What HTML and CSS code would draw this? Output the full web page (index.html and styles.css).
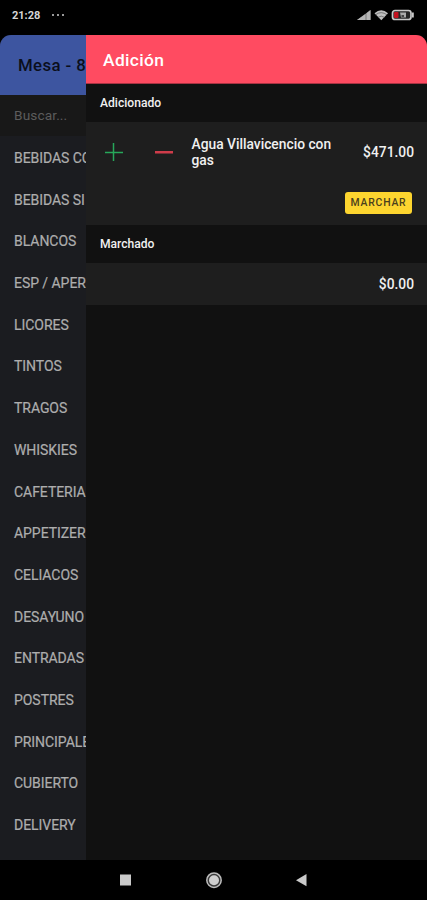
FILE: index.html
```html
<!DOCTYPE html>
<html lang="es">
<head>
<meta charset="utf-8">
<title>Adición</title>
<link rel="stylesheet" href="styles.css">
</head>
<body>
<div class="phone">
  <div class="status">
    <span class="clock">21:28</span>
    <span class="dots"><i></i><i></i><i></i></span>
    <svg class="status-icons" width="60" height="14" viewBox="0 0 60 14">
      <path d="M1 12 14.500 2V12Z" fill="#777"/>
      <path d="M1 12 9.500 6V12ZM10.500 5.200 14.500 2V12H10.500Z" fill="#b4b4b4"/>
      <path d="M18.500 5.200Q25.200-.8 32 5.200L25.300 12.300Z" fill="#c0c0c0"/>
      <path d="M19.500 6.800Q25.200 2.500 31 6.800M22 9.300Q25.200 7 28.500 9.300" fill="none" stroke="#555" stroke-width=".7"/>
      <rect x="36.500" y="2.500" width="18.500" height="9" rx="2.500" fill="#262626" stroke="#c8c8c8" stroke-width="1.700"/>
      <path d="M56 4.500h1.800v5H56z" fill="#c8c8c8"/>
      <rect x="38" y="4" width="4.500" height="6" rx="1" fill="#c3121f"/>
      <path d="M44 4.500h6v5h-5z" fill="#aaa"/>
      <path d="M45.500 7h2.500v2h-2.500z" fill="#444"/>
    </svg>
  </div>
  <div class="app">
    <div class="menu">
      <div class="menu-head">Mesa - 8</div>
      <div class="search">Buscar...</div>
      <div class="items">
        <div>BEBIDAS CO</div><div>BEBIDAS SI</div><div>BLANCOS</div><div>ESP / APER</div><div>LICORES</div><div>TINTOS</div><div>TRAGOS</div><div>WHISKIES</div><div>CAFETERIA</div><div>APPETIZER</div><div>CELIACOS</div><div>DESAYUNO</div><div>ENTRADAS</div><div>POSTRES</div><div>PRINCIPALE</div><div>CUBIERTO</div><div>DELIVERY</div>
      </div>
    </div>
    <div class="panel">
      <div class="panel-head"><span>Adición</span></div>
      <div class="section"><span class="added">Adicionado</span></div>
      <div class="order">
        <div class="line">
          <svg class="plus" width="18" height="18" viewBox="0 0 18 18"><path d="M0 9.500H18M8.500 0V18" stroke="#27a75a" stroke-width="1.500"/></svg>
          <svg class="minus" width="18" height="18" viewBox="0 0 18 18"><path d="M0 9.200H18" stroke="#cf3c4a" stroke-width="2.400"/></svg>
          <div class="name"><span class="name-one">Agua Villavicencio con</span><br><span>gas</span></div>
          <span class="price">$471.00</span>
        </div>
        <div class="action"><div class="button"><span>MARCHAR</span></div></div>
      </div>
      <div class="section"><span>Marchado</span></div>
      <div class="total"><span>$0.00</span></div>
    </div>
  </div>
  <div class="nav">
    <svg width="427" height="40" viewBox="0 0 427 40">
      <path d="M120 14.500h11v11h-11z" fill="#cacaca"/>
      <circle cx="214" cy="20.200" r="7.200" fill="#3a3a3a" stroke="#bdbdbd" stroke-width="1.500"/>
      <circle cx="214" cy="20.200" r="5" fill="#cfcfcf"/>
      <path d="M296 20.200 306.500 14v12.200Z" fill="#cacaca"/>
    </svg>
  </div>
</div>
</body>
</html>
```
FILE: styles.css
```css
* { box-sizing: border-box; }
body { margin: 0; background: #000; font-family: Roboto, "Liberation Sans", sans-serif; }
.phone { width: 427px; height: 900px; display: flex; flex-direction: column; overflow: hidden; background: #000; }
.status { height: 35px; display: flex; align-items: center; padding: 0 11px 5px 12px; }
.clock { width: 28px; font-size: 11px; font-weight: 700; color: #d5d5d5; }
.dots { display: flex; gap: 3px; margin-left: 12px; }
.dots i { width: 2px; height: 2px; background: #999; }
.status-icons { margin-left: auto; }
.app { height: 825px; display: flex; border-radius: 11px 11px 0 0; overflow: hidden; background: #111; }
.menu { width: 86px; flex: none; overflow: hidden; background: #1b1c20; white-space: nowrap; }
.menu-head { height: 60px; padding-left: 18px; line-height: 61px; font-size: 16.8px; font-weight: 500; letter-spacing: .4px; color: #0b0f1c; background: #3d55a0; }
.search { height: 41px; padding-left: 14px; line-height: 40px; font-size: 13.7px; letter-spacing: .1px; color: #5c5c5c; background: #181818; }
.items { display: flex; flex-direction: column; }
.items div { height: 41.7px; padding-left: 14px; line-height: 44.6px; font-size: 14px; letter-spacing: -.05px; color: #adadad; -webkit-text-stroke: .2px #adadad; }
.panel { flex: 1; background: #111; color: #f0f0f0; font-weight: 500; }
.panel-head { height: 49px; padding-left: 17px; line-height: 51px; font-size: 17.4px; letter-spacing: .35px; color: #fff; background: #ff4b61; border-bottom: 1px solid #a83343; }
.section { height: 38px; padding-left: 14px; line-height: 39px; font-size: 12.1px; background: #111; }
.order { height: 103px; background: #1e1e1e; }
.line { height: 60px; display: flex; align-items: center; padding: 0 13px 0 19px; }
.minus { margin-left: 32px; }
.name { margin-left: 18.5px; font-size: 13.8px; line-height: 16px; white-space: nowrap; }
.price { margin-left: auto; font-size: 13.8px; }
.action { display: flex; justify-content: flex-end; padding: 10px 15px 0 0; }
.button { width: 67px; height: 22px; border-radius: 3px; background: #fdd52f; color: #4b401c; text-align: center; font-size: 10.4px; line-height: 22px; letter-spacing: .8px; }
.total { height: 42px; padding-right: 13px; text-align: right; line-height: 42px; font-size: 13.8px; background: #1e1e1e; }
.nav { height: 40px; }
.nav svg { display: block; }
```
